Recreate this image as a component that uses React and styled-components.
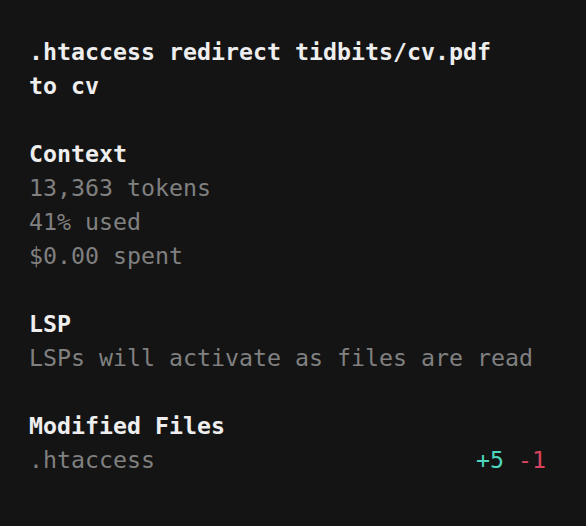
import React from "react";
import styled, { createGlobalStyle } from "styled-components";

const Global = createGlobalStyle`
  html, body { margin: 0; padding: 0; background: #141414; }
  body { width: 586px; height: 526px; overflow: hidden; }
`;

const Panel = styled.div`
  box-sizing: border-box;
  width: 586px;
  height: 526px;
  background: #141414;
  padding: 35px 40px 0 29px;
  font-family: "DejaVu Sans Mono", "Liberation Mono", monospace;
  font-size: 23.25px;
  line-height: 34px;
  color: #eeeeee;
  display: flex;
  flex-direction: column;
  gap: 34px;
`;

const Section = styled.div`
  display: flex;
  flex-direction: column;
`;

const Title = styled.div`
  font-weight: bold;
  color: #eeeeee;
  white-space: pre-wrap;
`;

const Heading = styled.div`
  font-weight: bold;
  color: #eeeeee;
`;

const Line = styled.div`
  color: #808080;
  white-space: pre;
`;

const Row = styled.div`
  display: flex;
  justify-content: space-between;
  color: #808080;
`;

const Diff = styled.span`
  color: ${(p) => (p.$kind === "add" ? "#4fd6be" : "#d9435f")};
`;

const Stats = styled.span`
  display: flex;
  gap: 14px;
`;

export default function App() {
  return (
    <>
      <Global />
      <Panel>
        <Section>
          <Title>.htaccess redirect tidbits/cv.pdf</Title>
          <Title>to cv</Title>
        </Section>
        <Section>
          <Heading>Context</Heading>
          <Line>13,363 tokens</Line>
          <Line>41% used</Line>
          <Line>$0.00 spent</Line>
        </Section>
        <Section>
          <Heading>LSP</Heading>
          <Line>LSPs will activate as files are read</Line>
        </Section>
        <Section>
          <Heading>Modified Files</Heading>
          <Row>
            <span>.htaccess</span>
            <Stats>
              <Diff $kind="add">+5</Diff>
              <Diff $kind="del">-1</Diff>
            </Stats>
          </Row>
        </Section>
      </Panel>
    </>
  );
}
